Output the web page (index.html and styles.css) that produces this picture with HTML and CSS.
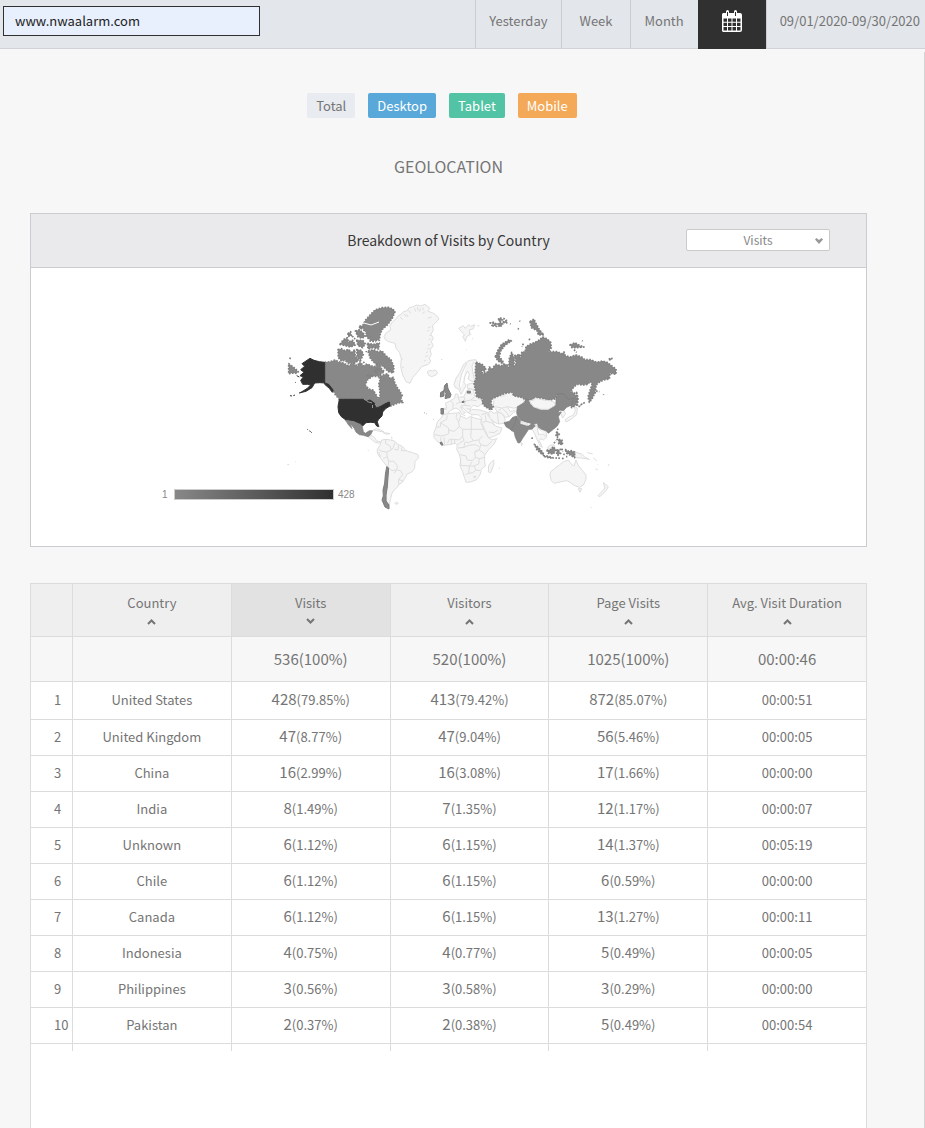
FILE: index.html
```html
<!DOCTYPE html>
<html lang="en">
<head>
<meta charset="utf-8">
<title>Geolocation</title>
<link rel="stylesheet" href="styles.css">
</head>
<body>
<header class="topbar">
  <input class="site" type="text" value="www.nwaalarm.com" aria-label="Website">
  <nav class="range">
    <button class="range-btn">Yesterday</button>
    <button class="range-btn">Week</button>
    <button class="range-btn">Month</button>
    <button class="range-btn calendar" aria-label="Pick dates">
      <svg width="22" height="23" viewBox="0 0 22 23" aria-hidden="true">
        <path class="cal-body" fill-rule="evenodd" d="M2 3h3V1.500a1.500 1.500 0 0 1 3 0V3h5V1.500a1.500 1.500 0 0 1 3 0V3h3a2 2 0 0 1 2 2v15a2 2 0 0 1-2 2H2a2 2 0 0 1-1-2V5a2 2 0 0 1 1-2zM2.500 8.500v3.200H6V8.500zM7 8.500v3.200h3.500V8.500zM11.500 8.500v3.200H15V8.500zM16 8.500v3.200h3.500V8.500zM2.500 12.700v3.300H6v-3.300zM7 12.700v3.300h3.500v-3.300zM11.500 12.700v3.300H15v-3.300zM16 12.700v3.300h3.500v-3.300zM2.500 17v3.500H6V17zM7 17v3.500h3.500V17zM11.500 17v3.500H15V17zM16 17v3.500h3.500V17z"/>
        <path class="cal-slot" d="M6.500 2v4M14.500 2v4"/>
      </svg>
    </button>
    <span class="dates">09/01/2020-09/30/2020</span>
  </nav>
</header>
<main class="page">
  <div class="devices">
    <button class="pill total">Total</button>
    <button class="pill desktop">Desktop</button>
    <button class="pill tablet">Tablet</button>
    <button class="pill mobile">Mobile</button>
  </div>
  <h1 class="heading">GEOLOCATION</h1>

  <section class="card">
    <div class="card-head">
      <h2 class="card-title">Breakdown of Visits by Country</h2>
      <div class="metric">
        <select class="metric-select" aria-label="Metric"><option>Visits</option><option>Visitors</option><option>Page Visits</option></select>
        <svg class="metric-arrow" width="8" height="6" viewBox="0 0 8 6" aria-hidden="true"><path d="M0 1.500L1.500 0 4 2 6.500 0 8 1.500 4 6z"/></svg>
      </div>
    </div>
    <svg class="map" viewBox="31 268 835 278" role="img" aria-label="World map of visits">
      <defs>
        <linearGradient id="scale"><stop offset="0" stop-color="#888"/><stop offset="1" stop-color="#303030"/></linearGradient>
      </defs>
      <!-- Greenland, Iceland, Svalbard, Scandinavia -->
      <g class="none" transform="translate(380 295) scale(.33333)">
        <path d="M12 125L20 112 32 105 30 92 38 80 48 72 55 62 64 58 70 50 80 48 88 38 98 36 110 30 122 33 135 28 150 40 143 48 160 55 170 62 177 72 165 85 157 92 160 105 153 118 160 130 154 140 160 152 150 165 154 178 148 190 152 198 145 208 125 215 112 232 98 248 90 265 78 260 68 240 62 215 64 190 58 172 48 160 45 145 25 140 15 132z"/>
        <path d="M60 66l8 8M72 56l6 9M86 46l6 9M104 40l3 10M122 40l-4 10M135 50l-8 5M155 66l-12 4M152 95l-8 4M154 120l-6 2M150 148l-6 3M144 170l-6 3M138 195l-6 4M68 190l-4 5M72 215l-6 4M148 105l-6 4M152 132l-6 2M148 160l-6 2M144 182l-8 2M80 58l4 8M112 36l2 10M130 38l-2 8"/>
        <path d="M142 230L150 226 158 228 165 225 173 232 168 240 155 245 146 241z"/>
        <path d="M236 100l14-8 6 8 10-11 6 5 12-5-4 12-12 4 2 14-10 6-4 14-8-15 6-4-8-8zM292 92l6 1M183 193l4 1M258 163l2 1M190 252l1 1M268 116l6 2M276 130l3 2"/>
        <path d="M222 268L228 250 240 232 250 210 260 200 270 196 288 194 293 204 287 216 288 240 290 256 276 260 264 252 268 238 262 228 254 246 252 262 258 272 250 286 243 298 236 282 226 278zM260 204L244 240 238 270 242 285M282 200L276 214 280 240 284 256M262 268L282 264 286 284 262 280z"/>
      </g>
      <!-- Latin America -->
      <g class="none" transform="translate(280 390) scale(.33333)">
        <path d="M264 140L276 137 286 145 289 153 302 156 296 160 284 156 272 146zM280 120L290 116 302 120 312 126 300 124zM310 128l10 1 10 2-10 2zM298 107l2 5M335 140l1 8"/>
        <path d="M305 150L318 148 332 150 345 154 352 162 368 170 378 182 398 188 414 194 415 204 405 215 404 235 395 246 382 252 374 266 366 278 356 284 352 292 344 298 336 310 332 325 328 345 320 340 318 300 322 262 326 235 315 222 302 205 292 190 292 178 300 166z"/>
        <path d="M318 148L316 160 330 168 334 180 320 186 322 200 310 206M345 158L340 172 334 180M356 166L354 180 342 178M366 172L364 182 378 182M296 178L306 184 320 186M302 200L296 186M322 200L326 214 324 232M326 214L342 214 352 228 350 240 336 242 328 236M352 240L362 242 368 254 356 268 356 284M350 240L342 250M356 268L370 274"/>
        <path d="M344 340l6-3 5 3-6 3zM263 180l3 2M22 223l5 1M46 215l2 1M432 68l3 1M438 71l2 1"/>
      </g>
      <!-- Europe, Africa, Middle East, Central Asia -->
      <g class="none" transform="translate(420 380) scale(.33333)">
        <path d="M76 70L92 62 104 54 106 42 114 42 114 52 132 50 140 32 150 26 160 30 164 48 176 56 194 62 195 72 182 74 175 80 160 76 152 84 150 100 140 96 132 86 122 80 128 92 136 98 126 104 118 90 108 84 98 88 90 92 80 104 66 105 62 86 80 84z"/>
        <path d="M92 62L100 72 98 88M114 52L120 66 108 72M132 50L136 64 120 68M136 64L152 60 164 50M136 64L134 76 122 78M134 76L152 78M140 40L156 42M152 60L170 62M140 86L152 88M66 88L80 88"/>
        <path d="M146 98L156 88 180 90 192 94 206 98 210 92 222 100 232 96 244 100 252 110 256 122 252 130 236 132 222 126 212 116 226 138 246 144 240 160 218 170 206 174 196 152 186 130 184 112 174 104 156 104z"/>
        <path d="M184 104L200 100 212 116M196 106L198 124 188 128M198 124L214 128 224 136M206 156L222 158 234 150M206 98L208 110M232 98L234 116 236 132"/>
        <path d="M222 62L215 52 228 48 252 48 256 40 278 36 288 48 310 55 313 68 296 80 290 92 280 98 268 110 256 112 246 100 232 96 226 86 220 76zM226 80L246 84 262 80 282 84 296 80M246 84L262 100 268 110M262 80L270 94 284 92M244 84L236 94"/>
        <path d="M72 103L95 100 118 98 122 108 140 116 150 110 172 116 184 118 182 128 192 150 204 172 216 180 230 176 222 192 205 210 194 225 194 245 196 258 184 268 180 285 168 300 152 306 138 307 134 295 128 275 120 258 122 240 118 222 110 208 112 196 105 190 88 194 70 196 54 186 42 172 42 158 48 142 52 125 62 115z"/>
        <path d="M48 142L62 140 62 128 80 118 82 106M62 128L86 144 86 162 66 168 44 164M112 100L108 112 116 126 118 140 102 154 86 150M116 126L122 108M118 140L128 148 128 168 118 180 100 178 88 178 82 190M154 112L154 148 128 148M154 148H190M154 148L152 170 160 182 176 180 188 168M128 168L132 182 120 188 112 196M160 182L146 188 134 186M104 180L104 190M72 172L74 194M62 172L64 190M94 178L94 192M176 180L182 194 200 198 216 184M182 194L178 210 194 222M134 188L132 202 114 204M132 202L146 196 166 194 178 200M120 224L138 228 142 240 158 242 166 232 164 216 172 208M122 232L122 256 148 258 156 246M178 210L164 216M166 232L178 236 194 232M178 236L176 252 162 258 148 258 146 280 136 284M162 258L168 270 158 278 146 280M168 270L180 272M168 290l-6 4 0-6z"/>
        <path d="M206 256L214 246 221 240 222 252 212 278 205 276zM236 265l4-1M232 174l2 1M130 106l6 1M152 108l5 0"/>
      </g>
      <!-- South-east Asia, Japan, Oceania -->
      <g class="none" transform="translate(500 390) scale(.33333)">
        <path d="M97 108L106 101 112 112 120 120 128 118 138 126 141 140 130 150 122 146 118 152 127 172 120 168 112 150 105 134 98 120zM112 114L116 134 128 132 140 140M64 157l4 6-4 4z"/>
        <path d="M195 90L208 80 220 76 226 60 222 50 232 54 230 74 216 86 198 96zM180 62L192 58 196 72 188 84 183 72zM142 174L150 166 162 164 164 172 150 178z"/>
        <path d="M152 245L165 235 178 225 190 215 205 210 212 220 222 228 228 210 236 228 246 240 258 255 258 268 250 285 238 292 222 286 212 278 200 272 180 276 162 280 154 272 150 255zM235 296L245 296 240 307z"/>
        <path d="M224 186L245 192 255 202 268 208 244 204 224 203zM262 188l16 4M280 204l10 8M310 278L325 290 318 302 300 320 294 317 308 302 315 294zM286 236l8 4M324 228l4-6M292 222l2 2M272 352l3 1"/>
      </g>
      <!-- Canada and the Arctic islands -->
      <g class="some rough" transform="translate(280 295) scale(.33333)">
        <path d="M134 202L150 200 165 195 175 200 190 204 205 212 220 206 232 212 240 200 250 213 262 207 275 213 288 215 290 205 300 211 305 222 313 230 302 238 298 244 278 244 262 255 256 270 266 282 280 286 290 302 294 312 300 304 299 284 296 268 300 255 297 245 310 240 322 236 330 250 340 247 344 262 350 275 358 286 367 302 362 312 369 322 355 324 345 328 330 334 325 321 315 326 300 335 288 337 283 323 270 317 250 313 178 313 165 298 160 286 146 268 134 264z"/>
        <path d="M248 92L256 76 270 60 285 45 305 38 325 37 338 42 345 50 338 68 322 90 306 104 300 120 298 136 275 138 262 128 256 112 250 104z"/>
        <path d="M174 164L184 161 195 167 205 163 215 172 224 164 226 184 236 196 222 206 205 205 195 196 184 198 175 188zM230 164L244 166 250 178 242 196 232 188zM264 168L280 164 294 170 306 168 318 182 333 194 342 215 340 234 325 230 312 217 300 208 286 206 276 196 270 188zM262 145L280 148 298 144 296 162 280 158 264 162zM180 148L190 134 202 128 205 140 218 136 226 150 212 156 196 152zM204 116L212 110 214 122 204 124zM226 108L238 104 248 112 256 124 246 130 234 126zM238 94l8-2 2 8-8 2zM230 136L248 136 256 146 248 158 234 152zM262 242L274 240 270 247zM26 206L40 216 55 230 50 235 38 234 26 236zM28 189l5 2M284 228L292 222 290 236zM216 124l8 4M250 200l6 8M296 222l6 6M258 168l4 8M222 130l4 2M268 138l20 2"/>
      </g>
      <path class="ice" d="M364 323l7 2 8-3M366 352l2 5M362 331l4 2"/>
      <!-- Mexico -->
      <g class="some" transform="translate(280 295) scale(.33333)">
        <path d="M195 375L222 377 230 382 240 386 247 395 250 410 256 415 268 407 278 407 272 419 264 425 250 421 238 419 228 411 222 399 211 386 216 401 205 389 200 381z"/>
      </g>
      <!-- United States -->
      <g class="most" transform="translate(280 295) scale(.33333)">
        <path d="M134 202L118 200 102 196 90 190 78 198 66 206 74 214 62 224 72 232 60 242 70 246 62 256 68 268 82 268 92 270 82 280 66 290 58 294 78 289 96 278 104 264 120 263 134 264 146 268 160 286 157 292 148 280 134 268zM30 302l6 1M40 302l5-2M46 262l2 1M50 242l8 4"/>
        <path d="M178 313L250 313 258 319 270 315 284 325 288 339 300 335 318 325 328 321 330 333 318 340 308 351 306 363 296 373 292 380 296 395 290 393 284 383 272 382 258 383 248 393 240 385 230 381 222 377 195 373 184 365 176 353 174 335 176 323zM82 403l2 1M87 407l2 1M91 409l4 4"/>
      </g>
      <path class="lakes" d="M367 401.500l5 1.500M372.500 405v3M375 404l1.500 2"/>
      <path class="some" d="M386.700 466.700L388.700 468 388 477 387.300 487 386 495 386 501 389 505 389 509 385 507 382 500 383.300 496 383 490 384.700 483 385.300 475z"/>
      <!-- Russia -->
      <g class="some rough" transform="translate(470 305) scale(.33333)">
        <path d="M18 172L36 178 48 190 44 200 34 196 38 206 54 200 58 186 66 192 72 184 78 178 92 182 110 178 116 188 118 160 125 142 132 158 132 184 138 176 134 152 150 148 150 160 156 140 165 142 168 125 180 118 195 112 208 105 218 96 232 102 242 112 244 128 236 140 262 140 276 146 282 141 286 152 300 156 318 150 335 156 345 164 362 164 380 172 398 168 412 172 428 185 438 192 438 208 420 205 418 222 400 225 382 235 378 245 376 262 366 282 358 292 354 275 362 250 366 238 360 228 354 238 340 240 322 238 312 245 302 260 314 264 322 285 318 300 305 308 300 300 292 285 280 268 262 268 255 282 235 286 215 280 196 278 180 288 165 285 158 278 130 272 128 262 105 265 88 272 66 282 62 295 70 305 64 315 45 305 36 292 38 282 20 275 15 250 12 235 18 220 16 200z"/>
        <path d="M76 155L84 135 95 118 118 104 124 108 104 122 92 138 88 155 98 168 102 178 84 168zM180 50L192 42 196 52 202 62 207 72 213 80 222 90 205 90 202 78 192 72 184 68zM58 54L70 52 78 56zM64 62l10-4 6 6zM84 44l6-6 8 6-8 4zM82 58l10-8 6 8-8 8zM98 52l12-6 0 8zM100 40l8 3M120 56l2 1M143 71l4 1M148 48l3 1M300 120L315 113 330 122 342 126 318 128 306 128zM312 134L320 142M336 107l2 1M416 162l10-2-4 6zM320 262L324 280 322 304 318 290zM378 258l10 2M400 268l1 2M326 306L334 298 346 292M176 104l6-2M160 116l-4 10"/>
      </g>
      <!-- China, India, Pakistan, Indonesia, Philippines -->
      <g class="some" transform="translate(500 390) scale(.33333)">
        <path d="M52 50L72 38 78 28 88 30 90 42 105 52 125 58 145 58 165 46 168 36 168 22 175 12 190 12 205 28 222 25 215 45 200 52 190 62 180 60 172 68 184 66 175 80 179 95 172 108 160 118 145 130 138 122 125 118 115 112 112 100 100 102 85 98 65 92 55 82 50 70z"/>
        <path d="M50 78L62 92 60 102 85 108 98 100 106 108 95 118 86 118 78 130 68 145 60 158 54 159 46 142 42 125 34 122 30 112 42 104z"/>
        <path d="M12 98L28 94 38 82 50 78 48 90 42 105 34 120 18 110z"/>
      </g>
      <g class="some rough" transform="translate(500 390) scale(.33333)">
        <path d="M103 163L115 172 128 186 132 197 122 190 110 178zM130 197L142 198 150 200 160 204 148 204 134 200zM166 204l16 1M186 206l8-2M198 200l4 0M140 180L150 180 160 170 168 180 160 192 145 190zM170 180L182 178 176 184 182 190 174 196 170 192zM195 178L206 184 214 182 224 186 224 203 212 196 200 190zM170 126L178 132 172 142 168 136zM176 148L186 150 188 164 176 162zM170 146l4 6M162 160l6-8M172 116l2 4M96 142l1 8M186 176l2 10M190 192l4 2"/>
      </g>
      <g class="none" transform="translate(500 390) scale(.33333)">
        <path d="M88 32L102 30 105 24 130 30 150 32 165 38 165 46 145 58 122 58 100 50zM62 96L70 96 84 102 82 106 68 102z"/>
      </g>
      <!-- Small European and African countries with visits -->
      <path class="some" d="M444.600 385.500L447 383 448 388.500 451 394.500 450 397.500 445 398.500 446 393.500 444 390zM440.600 392.500l3.400-2V396l-3.600 1zM441 408.500h2.400v5.500H441zM467.300 391.200h3v1.800h-3zM462 401.600l2-.6v1.400h-2zM440 442.600l1.600-.6 1.400 3-1.600.2z"/>
      <path class="some" d="M433.500 419.300l.3.200M424 412.600l.4.200M426 413.300l.3.200"/>
      <rect class="scale-bar" x="174.500" y="489.500" width="159" height="10" fill="url(#scale)"/>
      <text class="scale-label" x="162" y="498">1</text>
      <text class="scale-label" x="338" y="498">428</text>
    </svg>
  </section>

  <section class="table-box">
    <table class="stats">
      <colgroup><col class="col-num"><col><col><col><col><col></colgroup>
      <thead>
        <tr>
          <th></th>
          <th><button class="sort">Country<svg viewBox="0 0 9 7"><path d="M1 6l3.500-3.500L8 6"/></svg></button></th>
          <th class="active"><button class="sort">Visits<svg viewBox="0 0 9 7"><path d="M1 1l3.500 3.500L8 1"/></svg></button></th>
          <th><button class="sort">Visitors<svg viewBox="0 0 9 7"><path d="M1 6l3.500-3.500L8 6"/></svg></button></th>
          <th><button class="sort">Page Visits<svg viewBox="0 0 9 7"><path d="M1 6l3.500-3.500L8 6"/></svg></button></th>
          <th><button class="sort">Avg. Visit Duration<svg viewBox="0 0 9 7"><path d="M1 6l3.500-3.500L8 6"/></svg></button></th>
        </tr>
      </thead>
      <tbody>
        <tr class="sum"><td></td><td></td><td>536(100%)</td><td>520(100%)</td><td>1025(100%)</td><td>00:00:46</td></tr>
        <tr class="first"><td>1</td><td>United States</td><td><b>428</b>(79.85%)</td><td><b>413</b>(79.42%)</td><td><b>872</b>(85.07%)</td><td>00:00:51</td></tr>
        <tr><td>2</td><td>United Kingdom</td><td><b>47</b>(8.77%)</td><td><b>47</b>(9.04%)</td><td><b>56</b>(5.46%)</td><td>00:00:05</td></tr>
        <tr><td>3</td><td>China</td><td><b>16</b>(2.99%)</td><td><b>16</b>(3.08%)</td><td><b>17</b>(1.66%)</td><td>00:00:00</td></tr>
        <tr><td>4</td><td>India</td><td><b>8</b>(1.49%)</td><td><b>7</b>(1.35%)</td><td><b>12</b>(1.17%)</td><td>00:00:07</td></tr>
        <tr><td>5</td><td>Unknown</td><td><b>6</b>(1.12%)</td><td><b>6</b>(1.15%)</td><td><b>14</b>(1.37%)</td><td>00:05:19</td></tr>
        <tr><td>6</td><td>Chile</td><td><b>6</b>(1.12%)</td><td><b>6</b>(1.15%)</td><td><b>6</b>(0.59%)</td><td>00:00:00</td></tr>
        <tr><td>7</td><td>Canada</td><td><b>6</b>(1.12%)</td><td><b>6</b>(1.15%)</td><td><b>13</b>(1.27%)</td><td>00:00:11</td></tr>
        <tr><td>8</td><td>Indonesia</td><td><b>4</b>(0.75%)</td><td><b>4</b>(0.77%)</td><td><b>5</b>(0.49%)</td><td>00:00:05</td></tr>
        <tr><td>9</td><td>Philippines</td><td><b>3</b>(0.56%)</td><td><b>3</b>(0.58%)</td><td><b>3</b>(0.29%)</td><td>00:00:00</td></tr>
        <tr><td>10</td><td>Pakistan</td><td><b>2</b>(0.37%)</td><td><b>2</b>(0.38%)</td><td><b>5</b>(0.49%)</td><td>00:00:54</td></tr>
        <tr class="stub"><td></td><td></td><td></td><td></td><td></td><td></td></tr>
      </tbody>
    </table>
  </section>
</main>
</body>
</html>
```
FILE: styles.css
```css
* { box-sizing: border-box; }
body {
  margin: 0;
  min-height: 100vh;
  display: flex;
  flex-direction: column;
  background: #f7f7f7;
  color: #757575;
  font: 13px/20px "Noto Sans CJK SC", "Open Sans", sans-serif;
}
button, input, select { font: inherit; color: inherit; }
button { border: 0; background: none; padding: 0; cursor: pointer; }

.topbar {
  display: flex;
  justify-content: space-between;
  height: 49px;
  background: #e3e6eb;
  border-bottom: 1px solid #d0d2d6;
}
.site {
  width: 257px;
  height: 30px;
  margin: 6px 0 0 3px;
  padding: 0 11px 2px;
  border: 1px solid #303030;
  background: #e8effd;
  color: #222;
}
.range { display: flex; height: 49px; }
.range-btn, .dates {
  height: 48px;
  padding: 0 13px 6px;
  border-left: 1px solid #cbcdd1;
}
.range-btn:nth-child(2) { padding: 0 17px 6px 18px; }
.range-btn:nth-child(3) { padding: 0 14px 6px; }
.range-btn.calendar {
  display: flex;
  align-items: center;
  justify-content: center;
  width: 68px;
  height: 49px;
  border: 0;
  background: #303030;
}
.cal-body { fill: #fff; }
.cal-slot { fill: none; stroke: #303030; stroke-width: 1; }
.dates { padding: 11px 5px 0 13px; }

.page {
  flex: 1;
  display: flex;
  flex-direction: column;
  margin-top: 3px;
  padding: 41px 57px 0 30px;
  border-right: 1px solid #d4d4d4;
}
.devices {
  display: flex;
  justify-content: center;
  gap: 13px;
  padding-right: 13px;
}
.pill {
  height: 25px;
  padding: 0 9px;
  border-radius: 2px;
  color: #fff;
}
.total { background: #e8ebf0; color: #757575; }
.desktop { background: #58a9da; }
.tablet { background: #53c3a5; }
.mobile { background: #f3a957; }
.heading {
  margin: 36px 0 35px;
  font-size: 16px;
  line-height: 24px;
  font-weight: 400;
  text-align: center;
}

.card { border: 1px solid #cbccd0; background: #fff; }
.card-head {
  display: grid;
  grid-template-columns: 1fr auto 1fr;
  align-items: center;
  height: 54px;
  padding: 0 36px 2px;
  background: #eaeaec;
  border-bottom: 1px solid #cbccd0;
}
.card-title {
  grid-column: 2;
  margin: 0;
  color: #383838;
  font-size: 14px;
  font-weight: 400;
}
.metric { position: relative; justify-self: end; width: 144px; height: 22px; }
.metric-select {
  display: block;
  width: 100%;
  height: 22px;
  padding: 0;
  appearance: none;
  border: 1px solid #cacaca;
  border-radius: 2px;
  background: #fff;
  color: #888;
  font-size: 12px;
  text-align: center;
  text-align-last: center;
}
.metric-arrow { position: absolute; right: 7px; top: 9px; fill: #999; pointer-events: none; }

.map { display: block; width: 100%; height: auto; }
.none { fill: #f5f5f5; stroke: #ddd; stroke-width: 3; stroke-linejoin: round; }
.some { fill: #888; stroke: #7c7c7c; stroke-width: 2; stroke-linejoin: round; }
.most { fill: #303030; stroke: #303030; stroke-width: 3; stroke-linejoin: round; }
.rough { stroke: #808080; stroke-width: 5; stroke-dasharray: 5 4; }
path.none, path.some { stroke-width: 1; }
.ice { fill: none; stroke: #fff; stroke-width: 1; }
.lakes { fill: none; stroke: #999; stroke-width: 1; }
.scale-bar { stroke: #ccc; }
.scale-label { fill: #888; font: 10px "Liberation Sans", Arial, sans-serif; }

.table-box {
  flex: 1;
  margin-top: 36px;
  border: 1px solid #dcdcdc;
  border-bottom: 0;
  background: #fff;
}
.stats {
  width: 100%;
  table-layout: fixed;
  border-spacing: 0;
  text-align: center;
}
.col-num { width: 41px; }
th, td {
  height: 36px;
  padding: 0 0 2px;
  border-left: 1px solid #dcdcdc;
  border-bottom: 1px solid #dcdcdc;
  font-weight: 400;
}
th:first-child, td:first-child { border-left: 0; }
td:first-child { padding-left: 23px; text-align: left; }
th { height: 53px; background: #efefef; }
th.active { background: #e2e2e2; }
.sort { display: block; width: 100%; }
.sort svg {
  display: block;
  width: 9px;
  height: 7px;
  margin: 5px auto 0;
  fill: none;
  stroke: #757575;
  stroke-width: 2;
}
.sum td { height: 45px; padding-bottom: 0; background: #f7f7f7; font-size: 15px; }
.first td { height: 38px; }
.stats b { font-size: 15px; font-weight: 400; }
.stub td { height: 7px; padding: 0; border-bottom: 0; }
```
